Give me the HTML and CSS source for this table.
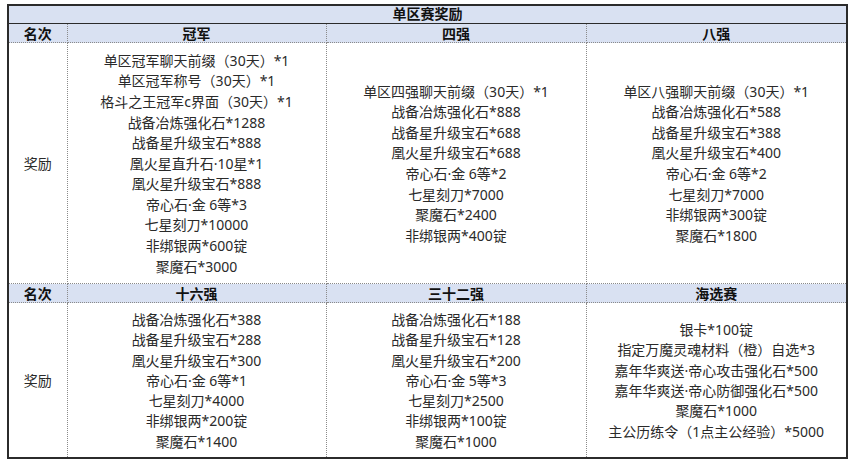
FILE: index.html
```html
<!DOCTYPE html>
<html lang="zh">
<head>
<meta charset="utf-8">
<title>单区赛奖励</title>
<link rel="stylesheet" href="styles.css">
</head>
<body>
<div class="wrap">
<table class="rewards">
  <colgroup>
    <col class="c-rank">
    <col class="c-a">
    <col class="c-b">
    <col class="c-c">
  </colgroup>
  <tr class="title-row"><th colspan="4">单区赛奖励</th></tr>
  <tr class="head-row">
    <th>名次</th><th>冠军</th><th>四强</th><th>八强</th>
  </tr>
  <tr class="data-row r1">
    <td class="label">奖励</td>
    <td>单区冠军聊天前缀（30天）*1<br>单区冠军称号（30天）*1<br>格斗之王冠军c界面（30天）*1<br>战备冶炼强化石*1288<br>战备星升级宝石*888<br>凰火星直升石·10星*1<br>凰火星升级宝石*888<br>帝心石·金 6等*3<br>七星刻刀*10000<br>非绑银两*600锭<br>聚魔石*3000</td>
    <td>单区四强聊天前缀（30天）*1<br>战备冶炼强化石*888<br>战备星升级宝石*688<br>凰火星升级宝石*688<br>帝心石·金 6等*2<br>七星刻刀*7000<br>聚魔石*2400<br>非绑银两*400锭</td>
    <td>单区八强聊天前缀（30天）*1<br>战备冶炼强化石*588<br>战备星升级宝石*388<br>凰火星升级宝石*400<br>帝心石·金 6等*2<br>七星刻刀*7000<br>非绑银两*300锭<br>聚魔石*1800</td>
  </tr>
  <tr class="head-row">
    <th>名次</th><th>十六强</th><th>三十二强</th><th>海选赛</th>
  </tr>
  <tr class="data-row r2">
    <td class="label">奖励</td>
    <td>战备冶炼强化石*388<br>战备星升级宝石*288<br>凰火星升级宝石*300<br>帝心石·金 6等*1<br>七星刻刀*4000<br>非绑银两*200锭<br>聚魔石*1400</td>
    <td>战备冶炼强化石*188<br>战备星升级宝石*128<br>凰火星升级宝石*200<br>帝心石·金 5等*3<br>七星刻刀*2500<br>非绑银两*100锭<br>聚魔石*1000</td>
    <td>银卡*100锭<br>指定万魔灵魂材料（橙）自选*3<br>嘉年华爽送·帝心攻击强化石*500<br>嘉年华爽送·帝心防御强化石*500<br>聚魔石*1000<br>主公历练令（1点主公经验）*5000</td>
  </tr>
</table>
</div>
</body>
</html>
```

FILE: styles.css
```css
html, body {
  margin: 0;
  padding: 0;
  background: #ffffff;
}

.wrap {
  padding: 4px 0 0 7px;
}

.rewards {
  border-collapse: collapse;
  table-layout: fixed;
  width: 839px;
  border: 2px solid #2b2b2b;
  font-family: "Noto Sans", "Noto Sans CJK SC", sans-serif;
  font-size: 14px;
  color: #2a2a2a;
}

.c-rank { width: 59px; }
.c-a { width: 259px; }
.c-b { width: 260px; }
.c-c { width: 261px; }

.rewards th,
.rewards td {
  padding: 0;
  text-align: center;
  vertical-align: middle;
  border: 1px dotted #8a8a8a;
}

.rewards th {
  background: #d9e1f2;
  font-weight: bold;
  color: #111111;
  line-height: 17px;
}

.title-row th {
  height: 15px;
  line-height: 15px;
  padding-bottom: 2px;
  border-bottom: 1px solid #2b2b2b;
}

.head-row th {
  height: 18px;
}

.data-row td {
  line-height: 20.6px;
  padding-top: 2px;
}

.r1 td { height: 238px; }
.r2 td { height: 152px; line-height: 20.3px; }
```
